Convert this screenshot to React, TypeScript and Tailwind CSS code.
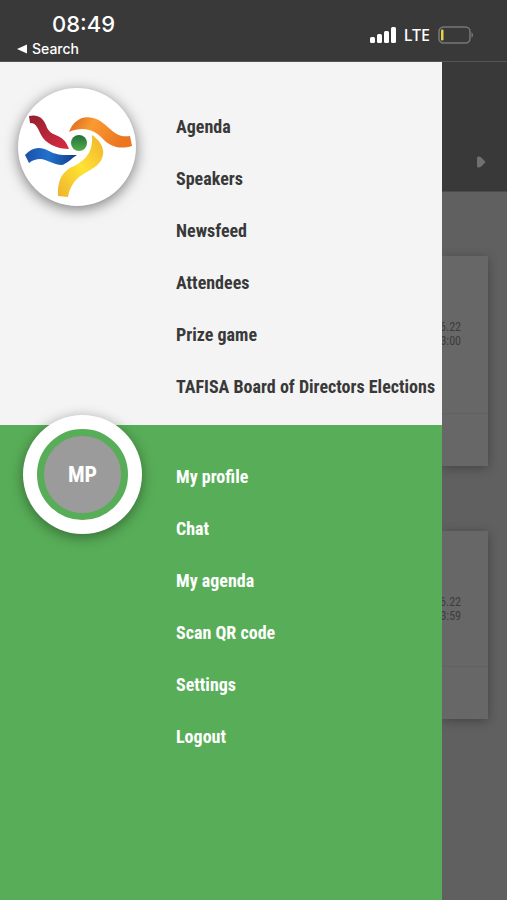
import React from "react";

const mainLinks = [
  "Agenda",
  "Speakers",
  "Newsfeed",
  "Attendees",
  "Prize game",
  "TAFISA Board of Directors Elections",
];

const userLinks = ["My profile", "Chat", "My agenda", "Scan QR code", "Settings", "Logout"];

const StatusBar = () => {
  return (
    <header className="flex h-[62px] shrink-0 justify-between border-b border-[#555] bg-[#393939] pl-4 pr-8 font-['Inter',sans-serif] text-white">
      <div className="pt-3">
        <div className="pl-9 text-[22px] font-medium leading-6">08:49</div>
        <a href="#search" className="flex items-center gap-1 pt-px text-sm font-medium leading-6">
          <svg width="12" height="10" viewBox="0 0 12 10" fill="currentColor" aria-hidden="true">
            <path d="M1 5 11 .5v9Z" />
          </svg>
          Search
        </a>
      </div>

      <div className="flex items-center gap-2 pt-2">
        <svg width="27" height="18" viewBox="0 0 27 18" fill="currentColor" aria-label="Signal">
          <rect x="1" y="11" width="5" height="6" rx="1.500" />
          <rect x="8" y="8" width="5" height="9" rx="1.500" />
          <rect x="15" y="5" width="5" height="12" rx="1.500" />
          <rect x="22" y="1" width="5" height="16" rx="1.500" />
        </svg>
        <span className="font-['Noto_Sans',sans-serif] text-base font-medium leading-6">LTE</span>
        <svg width="37" height="18" viewBox="0 0 37 18" fill="none" aria-label="Battery">
          <rect x="1" y="1" width="31" height="16" rx="4.500" stroke="#777" strokeWidth="1.500" />
          <rect x="3" y="3.500" width="2.500" height="11" rx="1" fill="#e8cf4a" />
          <path d="M33.500 6.500c2 .6 2 4.400 0 5Z" fill="#777" />
        </svg>
      </div>
    </header>
  );
};

const Logo = () => {
  return (
    <svg viewBox="0 0 118 118" className="w-full" role="img" aria-label="TAFISA">
      <defs>
        <linearGradient id="red" x1="0" y1="0" x2="1" y2="1">
          <stop offset="0" stopColor="#93202f" />
          <stop offset="1" stopColor="#d92b43" />
        </linearGradient>
        <linearGradient id="blue" x1="0" y1="0" x2="1" y2="0">
          <stop offset="0" stopColor="#1c50a5" />
          <stop offset=".45" stopColor="#2271cd" />
          <stop offset="1" stopColor="#123c83" />
        </linearGradient>
        <linearGradient id="orange" x1="0" y1="0" x2="1" y2=".3">
          <stop offset="0" stopColor="#d9611d" />
          <stop offset=".4" stopColor="#f99b31" />
          <stop offset="1" stopColor="#ec741f" />
        </linearGradient>
        <linearGradient id="yellow" x1="1" y1="0" x2="0" y2="1">
          <stop offset="0" stopColor="#f0b02c" />
          <stop offset=".5" stopColor="#ffe333" />
          <stop offset="1" stopColor="#eeb32c" />
        </linearGradient>
        <linearGradient id="green" x1="0" y1="0" x2="0" y2="1">
          <stop offset="0" stopColor="#237039" />
          <stop offset="1" stopColor="#52ad4b" />
        </linearGradient>
      </defs>
      <path d="M11 28C20 26 25 30 28 37C32 51 45 43 51 61C43 61 31 58 25 50C20 43 20 35 12 35Z" fill="url(#red)" />
      <path d="M7 67C14 59 22 58 31 63C40 68 48 67 59 67C53 71 48 76 44 77C35 77 29 71 22 71C18 71 15 72 11 75Z" fill="url(#blue)" />
      <path d="M51 44C55 34 63 27 75 30C91 34 94 51 112 48L114 58C101 62 91 58 84 50C76 42 66 38 51 44Z" fill="url(#orange)" />
      <path d="M74 47C84 54 89 64 82 74C73 86 55 84 50 109L40 108C39 93 44 83 56 78C70 71 75 62 74 47Z" fill="url(#yellow)" />
      <circle cx="61" cy="55" r="8" fill="url(#green)" />
    </svg>
  );
};

const NavLinks = ({ items }: { items: string[] }) => {
  return (
    <ul className="min-w-0 flex-1">
      {items.map((item) => (
        <li key={item}>
          <a href="#" className="flex h-[52px] items-center whitespace-nowrap text-[18px] font-bold">
            {item}
          </a>
        </li>
      ))}
    </ul>
  );
};

const EventCard = ({ date, time, className }: { date: string; time: string; className: string }) => {
  return (
    <article className={`flex flex-col bg-[#676767] shadow-[0_2px_10px_rgba(0,0,0,0.3)] ${className}`}>
      <div className="flex flex-1 flex-col items-end pr-[27px] pt-16 font-['Roboto_Condensed','Roboto',sans-serif] text-xs leading-[14px] text-[#3c3c3c]">
        <p>{date}</p>
        <p>{time}</p>
      </div>
      <div className="h-[53px] border-t border-[#616161]" />
    </article>
  );
};

const App = () => {
  return (
    <div className="flex min-h-screen flex-col bg-[#606060]">
      <StatusBar />

      <div className="flex flex-1">
        {/* Drawer */}
        <nav className="flex w-[87.2%] flex-col font-['Roboto_Condensed','Open_Sans_Condensed',sans-serif]">
          <div className="flex bg-[#f4f4f4] pb-[13px] pt-[38px] text-[#393939]">
            <div className="w-44 shrink-0 pl-[18px]">
              <div className="-mt-3 w-[118px] rounded-full bg-white shadow-[0_3px_14px_rgba(0,0,0,0.5)]">
                <Logo />
              </div>
            </div>
            <NavLinks items={mainLinks} />
          </div>

          <div className="flex flex-1 bg-[#58ae58] pt-[25px] text-white">
            <div className="w-44 shrink-0 pl-[23px]">
              <button
                type="button"
                aria-label="Open profile"
                className="-mt-[35px] flex size-[119px] items-center justify-center rounded-full bg-white shadow-[0_3px_14px_rgba(0,0,0,0.4)]"
              >
                <span className="flex size-[91px] items-center justify-center rounded-full border-[7px] border-[#58ae58] bg-[#9b9b9b] text-[22px] font-bold">
                  MP
                </span>
              </button>
            </div>
            <NavLinks items={userLinks} />
          </div>
        </nav>

        {/* Dimmed page behind the drawer */}
        <main className="min-w-0 flex-1 overflow-hidden">
          <div className="flex h-[130px] items-center justify-end border-b border-[#4c4c4c] bg-[#393939] pr-[21px] pt-[70px]">
            <button type="button" aria-label="Next" className="text-[#707070]">
              <svg width="10" height="12" viewBox="0 0 10 12" fill="currentColor">
                <path d="M1 2Q1 0 3 .5Q4.500 .7 5.500 1.700L9 5.200Q9.500 6 9 6.800L5.500 10.300Q4.500 11.300 3 11.500Q1 12 1 10Z" />
              </svg>
            </button>
          </div>
          <div className="flex flex-col gap-[65px] pr-[19px] pt-16">
            <EventCard date="6.22" time="3:00" className="h-[210px]" />
            <EventCard date="6.22" time="3:59" className="h-[188px]" />
          </div>
        </main>
      </div>
    </div>
  );
};

export default App;
